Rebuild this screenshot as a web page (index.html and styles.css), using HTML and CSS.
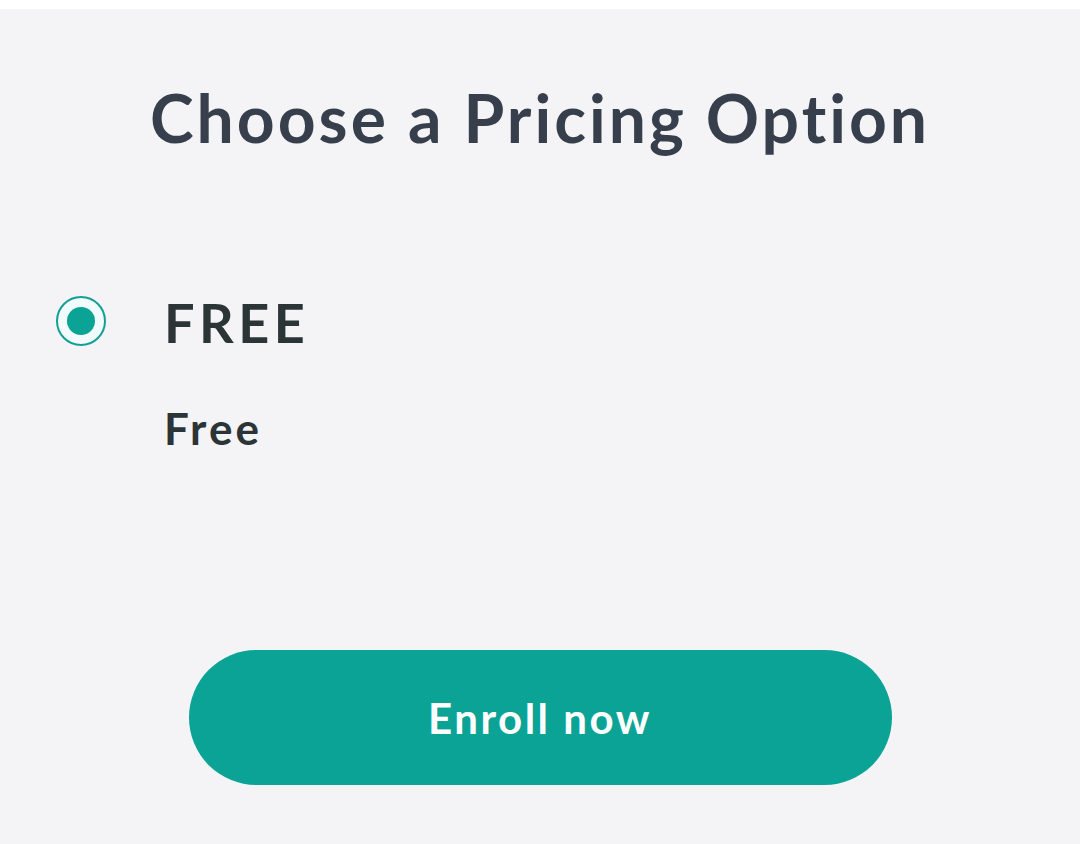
FILE: index.html
```html
<!DOCTYPE html>
<html lang="en">
<head>
<meta charset="utf-8">
<title>Choose a Pricing Option</title>
<link rel="stylesheet" href="styles.css">
</head>
<body>
<div class="topbar"></div>
<main class="page">
  <h1 class="title">Choose a Pricing Option</h1>
  <div class="option">
    <span class="radio"><span class="dot"></span></span>
    <div class="option-text">
      <div class="option-name">FREE</div>
      <div class="option-price">Free</div>
    </div>
  </div>
  <div class="actions">
    <button class="enroll" type="button">Enroll now</button>
  </div>
</main>
</body>
</html>
```
FILE: styles.css
```css
html, body {
  margin: 0;
  padding: 0;
  height: 100%;
}
body {
  background: #ffffff;
  font-family: Lato, "Open Sans", "Liberation Sans", sans-serif;
  display: flex;
  flex-direction: column;
}
.topbar {
  height: 9px;
  background: #ffffff;
  flex: none;
}
.page {
  flex: 1;
  background: #f4f4f6;
  display: flex;
  flex-direction: column;
  padding-top: 76px;
}
.title {
  margin: 0;
  text-align: center;
  font-size: 66px;
  line-height: 1;
  font-weight: 700;
  letter-spacing: 3px;
  color: #363f4b;
}
.option {
  display: flex;
  align-items: flex-start;
  margin-top: 145px;
  padding-left: 56px;
  gap: 58px;
}
.radio {
  width: 50px;
  height: 50px;
  box-sizing: border-box;
  border: 2.5px solid #139f95;
  border-radius: 50%;
  background: #f1fbfb;
  display: flex;
  align-items: center;
  justify-content: center;
  flex: none;
}
.dot {
  width: 28px;
  height: 28px;
  border-radius: 50%;
  background: #0ba396;
}
.option-text {
  display: flex;
  flex-direction: column;
  gap: 56px;
}
.option-name {
  font-size: 54px;
  line-height: 1;
  font-weight: 700;
  letter-spacing: 4.5px;
  color: #2b3537;
}
.option-price {
  font-size: 44px;
  line-height: 1;
  font-weight: 700;
  letter-spacing: 3px;
  color: #2b3537;
}
.actions {
  display: flex;
  justify-content: center;
  margin-top: 200px;
}
.enroll {
  width: 703px;
  height: 135px;
  border: none;
  border-radius: 68px;
  background: #0ba396;
  color: #ffffff;
  font-family: Lato, "Open Sans", "Liberation Sans", sans-serif;
  font-size: 42px;
  font-weight: 700;
  letter-spacing: 2.5px;
  padding: 0;
}
```
